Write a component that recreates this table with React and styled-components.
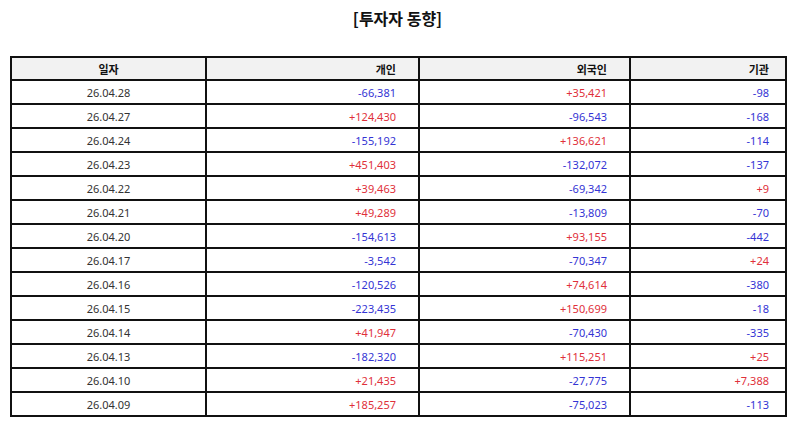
import React from "react";
import styled, { createGlobalStyle } from "styled-components";

const GlobalStyle = createGlobalStyle`
    html, body {
        margin: 0;
        padding: 0;
        background: #fff;
        font-family: "Noto Sans", "Noto Sans CJK KR", sans-serif;
    }
`;

const Page = styled.div`
    width: 794px;
    padding: 0 9px 0 10px;
    box-sizing: border-box;
`;

const Title = styled.h2`
    margin: 0;
    padding-top: 6px;
    height: 56px;
    box-sizing: border-box;
    text-align: center;
    font-family: "Noto Sans CJK KR", sans-serif;
    font-size: 16px;
    font-weight: 700;
    color: #111;
    line-height: 24px;
`;

const Table = styled.table`
    width: 100%;
    border-collapse: collapse;
    table-layout: fixed;
    font-family: "Noto Sans", "Noto Sans CJK KR", sans-serif;
    font-size: 11px;
`;

const HeadCell = styled.th`
    height: 21px;
    padding: 0 ${(p) => p.$pad || 0}px 0 0;
    border: 2px solid #111;
    background: #f2f2f2;
    text-align: ${(p) => p.$align || "right"};
    font-family: "Noto Sans CJK KR", sans-serif;
    font-weight: 700;
    color: #111;
`;

const Cell = styled.td`
    height: 22px;
    padding: 0 ${(p) => p.$pad || 0}px 0 0;
    border: 2px solid #111;
    text-align: ${(p) => p.$align || "right"};
    color: ${(p) => (p.$tone === "up" ? "#e0303a" : p.$tone === "down" ? "#3434d4" : "#333")};
`;

const columns = [
    { label: "일자", width: 195, align: "center", pad: 0 },
    { label: "개인", width: 213, pad: 22 },
    { label: "외국인", width: 211, pad: 22 },
    { label: "기관", width: 156, pad: 16 },
];

const rows = [
    ["26.04.28", "-66,381", "+35,421", "-98"],
    ["26.04.27", "+124,430", "-96,543", "-168"],
    ["26.04.24", "-155,192", "+136,621", "-114"],
    ["26.04.23", "+451,403", "-132,072", "-137"],
    ["26.04.22", "+39,463", "-69,342", "+9"],
    ["26.04.21", "+49,289", "-13,809", "-70"],
    ["26.04.20", "-154,613", "+93,155", "-442"],
    ["26.04.17", "-3,542", "-70,347", "+24"],
    ["26.04.16", "-120,526", "+74,614", "-380"],
    ["26.04.15", "-223,435", "+150,699", "-18"],
    ["26.04.14", "+41,947", "-70,430", "-335"],
    ["26.04.13", "-182,320", "+115,251", "+25"],
    ["26.04.10", "+21,435", "-27,775", "+7,388"],
    ["26.04.09", "+185,257", "-75,023", "-113"],
];

const toneOf = (v) => (v.startsWith("+") ? "up" : v.startsWith("-") ? "down" : undefined);

const App = () => (
    <>
        <GlobalStyle />
        <Page>
            <Title>[투자자 동향]</Title>
            <Table>
                <colgroup>
                    {columns.map((c) => (
                        <col key={c.label} style={{ width: c.width }} />
                    ))}
                </colgroup>
                <thead>
                    <tr>
                        {columns.map((c) => (
                            <HeadCell key={c.label} $align={c.align} $pad={c.pad}>
                                {c.label}
                            </HeadCell>
                        ))}
                    </tr>
                </thead>
                <tbody>
                    {rows.map((r) => (
                        <tr key={r[0]}>
                            {r.map((v, i) => (
                                <Cell
                                    key={i}
                                    $align={columns[i].align}
                                    $pad={columns[i].pad}
                                    $tone={i === 0 ? undefined : toneOf(v)}
                                >
                                    {v}
                                </Cell>
                            ))}
                        </tr>
                    ))}
                </tbody>
            </Table>
        </Page>
    </>
);

export default App;
